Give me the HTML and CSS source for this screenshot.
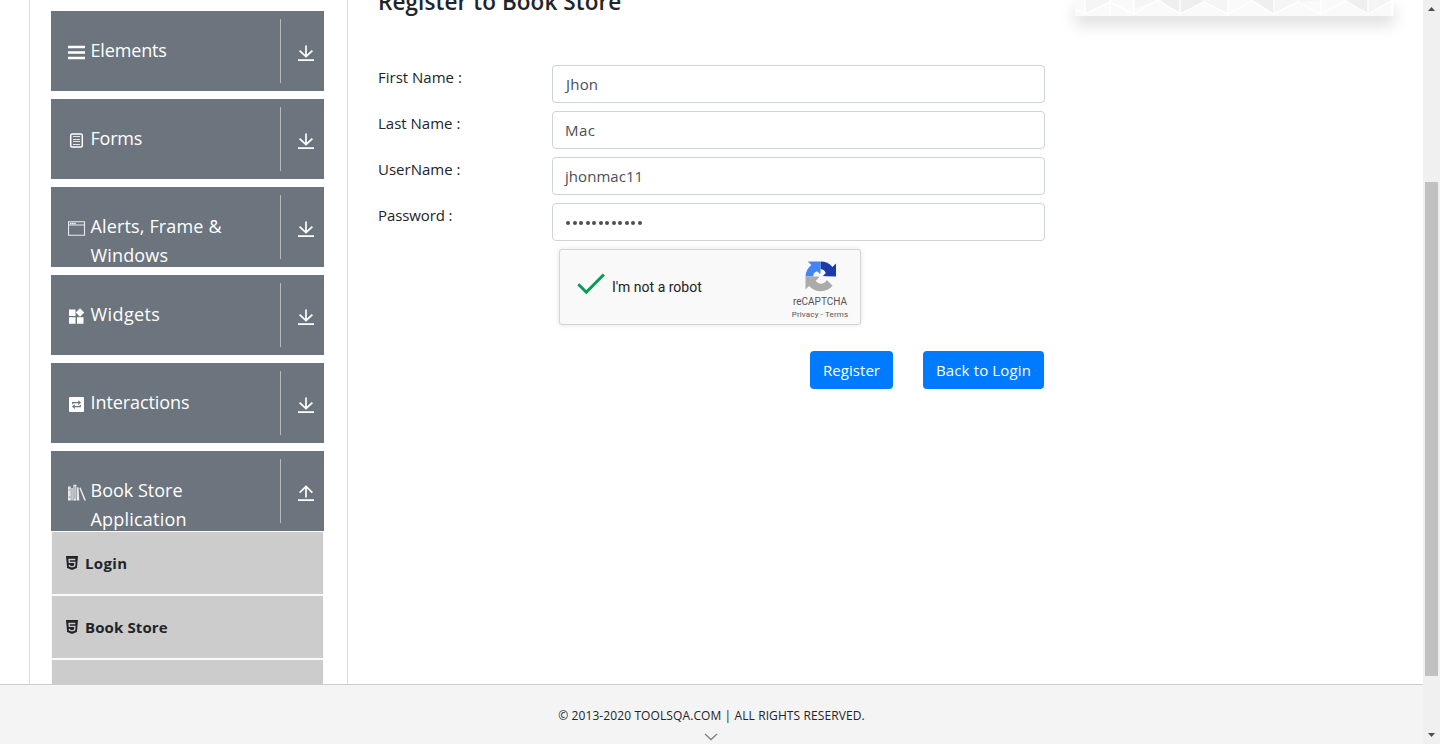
FILE: index.html
```html
<!DOCTYPE html>
<html lang="en">
<head>
<meta charset="utf-8">
<title>Book Store</title>
<link rel="stylesheet" href="styles.css">
</head>
<body>
<svg class="defs" width="0" height="0">
  <symbol id="down" viewBox="0 0 16 17"><path d="M8 0.500v11M1.600 5.600L8 11.600l6.400-6M0 15.200h16" fill="none" stroke="#fff" stroke-width="1.700"/></symbol>
  <symbol id="up" viewBox="0 0 16 17"><path d="M8 12.500v-11M1.600 7.600L8 1.500l6.400 6.100M0 15.200h16" fill="none" stroke="#fff" stroke-width="1.700"/></symbol>
  <symbol id="html5" viewBox="0 0 12 14"><path d="M0 0h12l-1.100 12L6 14 1.100 12z" fill="#212529"/><path d="M9.300 3.500H3.100l.2 2.900h5.600l-.3 3.600L6 10.900l-2.500-.9-.1-1.200" fill="none" stroke="#ccc" stroke-width="1.300"/></symbol>
</svg>
<div class="viewport">
  <div class="page">
    <main class="content">
      <aside class="sidebar">
        <div class="group"><svg class="icon" viewBox="0 0 18 18"><path d="M0 4h17M0 9.500h17M0 15h17" stroke="#fff" stroke-width="2.600"/></svg><span class="name t-elements">Elements</span><span class="toggle"><svg><use href="#down"/></svg></span></div>
        <div class="group"><svg class="icon" viewBox="0 0 18 18"><rect x="2.700" y="3" width="11.600" height="13" rx="1.500" fill="none" stroke="#fff" stroke-width="1.500"/><path d="M5 5.500h7M5 8.500h7M5 10.500h7M5 13.500h7" stroke="#fff" stroke-width=".8"/></svg><span class="name t-forms">Forms</span><span class="toggle"><svg><use href="#down"/></svg></span></div>
        <div class="group"><svg class="icon" viewBox="0 0 18 18"><path d="M.5 2.800h16v13.400H.5zM.5 6h16" fill="none" stroke="#fff" stroke-opacity=".85" stroke-width="1.100"/><path d="M2 4.400h6" stroke="#fff" stroke-width="1.500" stroke-dasharray="1.500 .6"/></svg><span class="name t-alerts">Alerts, Frame &amp;<br>Windows</span><span class="toggle"><svg><use href="#down"/></svg></span></div>
        <div class="group"><svg class="icon" viewBox="0 0 18 18"><path d="M1 2.500H7.500V9H1zM1 10.300h6.500v6.500H1zM9 10.300h6.500v6.500H9zM12 1.300l4.200 4.200L12 9.700 7.800 5.500z" fill="#fff"/></svg><span class="name t-widgets">Widgets</span><span class="toggle"><svg><use href="#down"/></svg></span></div>
        <div class="group"><svg class="icon" viewBox="0 0 18 18"><rect x="1" y="2" width="15" height="15" rx="1" fill="#fff"/><path d="M4.700 9.200V7.600h6M12.300 9.800v1.800h-6" fill="none" stroke="#6c757d" stroke-width="1.200"/><path d="M10.200 5.200l2.900 2.400-2.900 2.400zM6.800 9.200l-2.900 2.400 2.900 2.400z" fill="#6c757d"/></svg><span class="name t-inter">Interactions</span><span class="toggle"><svg><use href="#down"/></svg></span></div>
        <div class="group open"><svg class="icon" viewBox="0 0 18 18"><path d="M0 3.500h2.800V17.500H0zM3.400 5h1.300v12.500H3.400zM5.400 1.800h3v15.700h-3zM9 4.500l1.500-.3.800 13.300H9zM11.300 5l1.300-.4 5.300 12.600-1.500.5z" fill="#fff" fill-opacity=".85"/><path d="M.5 7h2M.5 14h2M6.900 3v13" stroke="#6c757d" stroke-width=".7"/></svg><span class="name t-book">Book Store<br><span class="t-app">Application</span></span><span class="toggle"><svg><use href="#up"/></svg></span></div>
        <ul class="menu">
          <li><svg><use href="#html5"/></svg><span class="t-login">Login</span></li>
          <li><svg><use href="#html5"/></svg><span class="t-store">Book Store</span></li>
          <li></li>
        </ul>
      </aside>
      <section class="register">
        <h1>Register to Book Store</h1>
        <form class="form">
          <label>First Name :</label><div class="field f1">Jhon</div>
          <label>Last Name :</label><div class="field f2">Mac</div>
          <label>UserName :</label><div class="field f3">jhonmac11</div>
          <label class="l4">Password :</label><div class="field"><span class="dots"><i></i><i></i><i></i><i></i><i></i><i></i><i></i><i></i><i></i><i></i><i></i><i></i></span></div>
        </form>
        <div class="captcha">
          <svg class="check" viewBox="0 0 28 22"><path d="M1.300 11.300l8 7.900L26.800 1.500" fill="none" stroke="#009e55" stroke-width="3"/></svg>
          <span class="robot">I'm not a robot</span>
          <div class="brand">
            <svg class="logo" viewBox="0 0 64 64"><path d="M64 32V5l-7.300 7.300A32 32 0 0 0 32 1v16c3-.3 6 .8 8 3l3 5-6 6 7 .5z" fill="#1c3aa9"/><path d="M32 1H6l7 7.300A32 32 0 0 0 1 32h16c0-4 1-7 4-9l4-2 6 6 1-4z" fill="#4285f4"/><path d="M1 32v27l7.300-7.300A32 32 0 0 0 57 51L45 39c-2 4-6 7-11 8-5 0-9-2-12-6l7-7-1-2z" fill="#ababab"/></svg>
            <span class="re">reCAPTCHA</span><span class="terms">Privacy - Terms</span>
          </div>
        </div>
        <div class="actions"><button class="b1">Register</button><button class="b2">Back to Login</button></div>
      </section>
      <div class="ad"><svg viewBox="0 0 319 16"><rect width="319" height="16" fill="#fafafa"/><path d="M10 0h25v2L10 14zM59 0h24L59 9zM130 0h23v14l-24-12zM178 0h20v12zM201 0h46L223 2l-25 12zM271 0h44l-22 14z" fill="#f5f5f5"/><path d="M83 0h23v13zM106 13L129 3V0h-23zM178 0l20 13V0zM271 0v2l22 12V0z" fill="#efefef"/><path d="M0 9l10 5L35 2l24 12L83 0l22 14 24-12 24 12 25-13 20 13 25-12 23 12 25-13 22 13 26-14M10 0v14M35 0v16M59 0v14M82 0v2M105 0v14M129 0v3M153 16V0M223 0v3M246 16V0M271 0v2M293 14V0M317 0v16" fill="none" stroke="#fff" stroke-width="1.400"/></svg></div>
    </main>
    <footer class="footer"><span class="copy">© 2013-2020 TOOLSQA.COM | ALL RIGHTS RESERVED.</span><svg class="chev" viewBox="0 0 14 8"><path d="M1 1l6 5.500L13 1" fill="none" stroke="#808080" stroke-width="1.300"/></svg></footer>
  </div>
  <div class="scroll"><svg class="arrow" viewBox="0 0 7 4"><path d="M0 4L3.500 0 7 4z" fill="#505050"/></svg><div class="thumb"></div><svg class="arrow" viewBox="0 0 7 4"><path d="M0 0h7L3.500 4z" fill="#505050"/></svg></div>
</div>
</body>
</html>
```
FILE: styles.css
```css
* { box-sizing: border-box; }
body { margin: 0; background: #fff; color: #212529; font: 15px/24px "Open Sans", "Noto Sans", sans-serif; overflow: hidden; }
svg { display: block; }
.defs { position: absolute; }
.viewport { display: flex; width: 1440px; height: 744px; }
.page { display: flex; flex-direction: column; width: 1423px; height: 744px; }
.content { display: flex; align-items: flex-start; height: 684px; overflow: hidden; padding-left: 29px; }
.sidebar { flex: none; width: 319px; height: 684px; border: solid #dcdcdc; border-width: 0 1px; padding: 11px 23px 0 21px; overflow: hidden; }
.group { display: flex; align-items: flex-start; height: 80px; margin-bottom: 8px; padding: 8px 0 0 17px; background: #6c757d; color: #fff; overflow: hidden; }
.group.open { margin-bottom: 0; }
.icon { flex: none; width: 18px; height: 18px; margin: 24px 4.500px 0 0; }
.name { flex: 1; padding-top: 17px; font-size: 18px; line-height: 29px; white-space: nowrap; }
.t-elements { letter-spacing: -.15px; }
.t-forms { letter-spacing: -.2px; }
.t-alerts { letter-spacing: .15px; }
.t-widgets { letter-spacing: .4px; }
.t-inter { letter-spacing: -.08px; }
.t-app { letter-spacing: .2px; }
.toggle { flex: none; width: 44px; height: 64px; border-left: 1px solid #b9b9b9; padding: 26px 0 0 17px; }
.toggle svg { width: 16px; height: 17px; }
.menu { list-style: none; margin: 0; padding: 0; font-weight: 700; }
.menu li { display: flex; align-items: center; gap: 7px; height: 64px; padding: 0 13px 0 14px; background: #ccc; border: 1px solid #fafafa; }
.menu svg { width: 12px; height: 14px; }
.t-login { letter-spacing: .35px; }
.t-store { letter-spacing: .12px; }
.register { flex: none; width: 667px; margin-left: 30px; }
h1 { margin: -13px 0 0; font-size: 22.500px; line-height: 29px; font-weight: 600; letter-spacing: .08px; white-space: nowrap; }
.form { display: grid; grid-template-columns: 174px 493px; row-gap: 8px; margin-top: 49px; }
.form label { line-height: 24px; }
.form .l4 { letter-spacing: -.1px; }
.field { height: 38px; border: 1px solid #ced4da; border-radius: 4px; padding: 6px 12px; color: #495057; }
.f1 { padding-left: 13px; letter-spacing: .2px; }
.f2 { letter-spacing: .4px; }
.f3 { letter-spacing: .05px; }
.dots { display: flex; gap: 2.500px; padding: 11px 1px; }
.dots i { width: 4px; height: 4px; border-radius: 2px; background: #495057; }
.captcha { display: flex; width: 302px; height: 76px; margin: 8px 0 0 181px; border: 1px solid #d3d3d3; border-radius: 3px; background: #f9f9f9; box-shadow: 0 0 4px 1px rgba(0,0,0,.08); font-family: Roboto, sans-serif; }
.check { width: 28px; height: 22px; margin: 23px 7px 0 17px; }
.robot { width: 174px; padding-top: 25px; font-size: 14px; color: #222; }
.brand { width: 68px; display: flex; flex-direction: column; align-items: center; padding-top: 11px; color: #555; }
.logo { width: 31px; height: 31px; }
.re { margin-top: 4px; font-size: 10px; line-height: 12px; }
.terms { margin-top: 1px; font-size: 8px; line-height: 12px; letter-spacing: .15px; white-space: nowrap; }
.actions { display: flex; justify-content: flex-end; gap: 30px; padding-right: 1px; margin-top: 26px; }
button { height: 38px; border: 0; border-radius: 4px; padding: 0; background: #007bff; color: #fff; font: 15px/24px "Open Sans", sans-serif; white-space: nowrap; }
.b1 { width: 83px; letter-spacing: .05px; }
.b2 { width: 121px; letter-spacing: .15px; }
.ad { width: 319px; height: 16px; margin-left: 30px; box-shadow: 0 8px 16px rgba(0,0,0,.15); }
.footer { height: 60px; border-top: 1px solid #ccc; background: #f4f4f4; display: flex; flex-direction: column; align-items: center; padding-top: 21px; }
.copy { font-size: 12px; line-height: 20px; letter-spacing: .1px; }
.chev { width: 14px; height: 8px; margin-top: 7px; margin-right: 2px; }
.scroll { width: 17px; height: 744px; background: #f0f0f0; display: flex; flex-direction: column; align-items: center; padding: 7px 0; }
.arrow { width: 7px; height: 4px; }
.thumb { width: 13px; height: 494px; margin: 171px 0 57px; background: #c1c1c1; }
```
